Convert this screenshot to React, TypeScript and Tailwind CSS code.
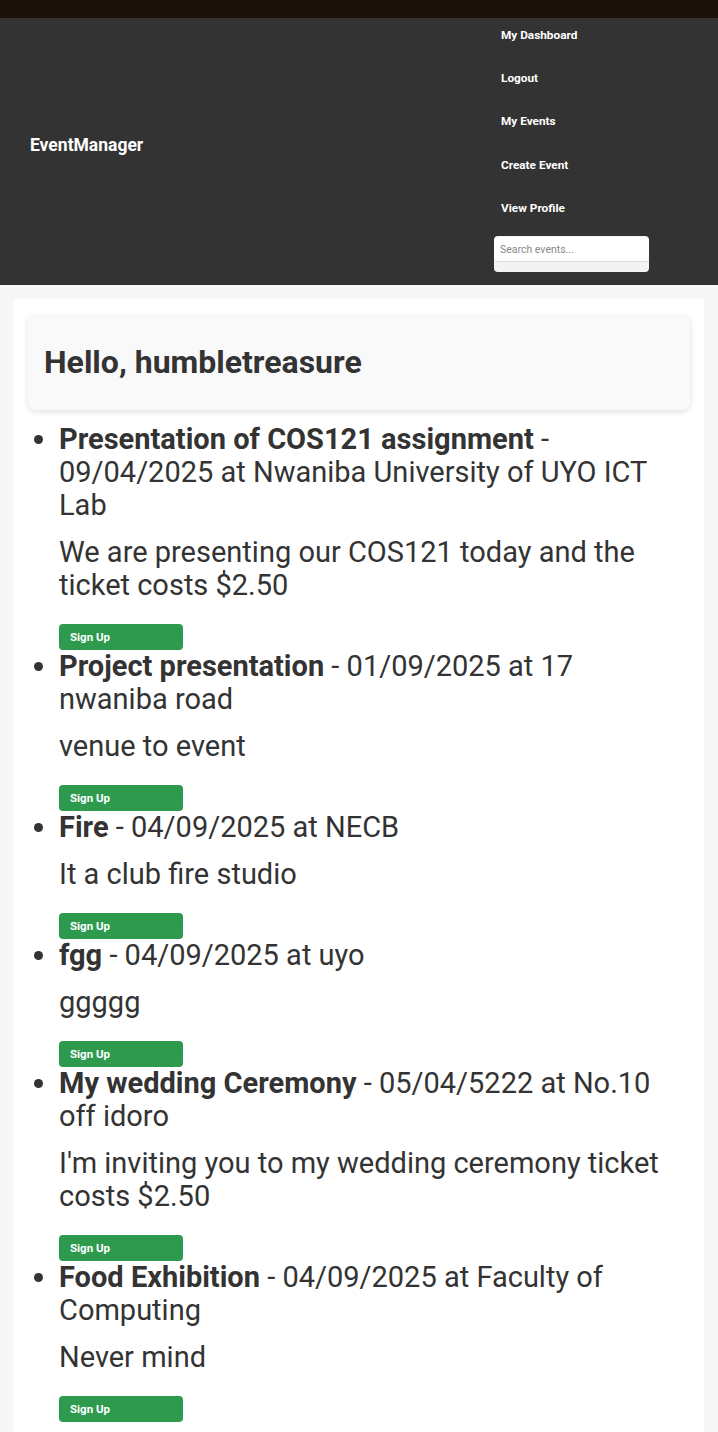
import React from "react";

type EventItem = {
  title: string;
  date: string;
  location: string;
  description: string;
};

const events: EventItem[] = [
  {
    title: "Presentation of COS121 assignment",
    date: "09/04/2025",
    location: "Nwaniba University of UYO ICT Lab",
    description: "We are presenting our COS121 today and the ticket costs $2.50",
  },
  {
    title: "Project presentation",
    date: "01/09/2025",
    location: "17 nwaniba road",
    description: "venue to event",
  },
  { title: "Fire", date: "04/09/2025", location: "NECB", description: "It a club fire studio" },
  { title: "fgg", date: "04/09/2025", location: "uyo", description: "ggggg" },
  {
    title: "My wedding Ceremony",
    date: "05/04/5222",
    location: "No.10 off idoro",
    description: "I'm inviting you to my wedding ceremony ticket costs $2.50",
  },
  {
    title: "Food Exhibition",
    date: "04/09/2025",
    location: "Faculty of Computing",
    description: "Never mind",
  },
];

const navLinks = ["My Dashboard", "Logout", "My Events", "Create Event", "View Profile"];

export default function App() {
  return (
    <div className="min-h-[1432px] bg-[#f7f7f7] font-['Roboto',sans-serif] text-[#333]">
      {/* status bar */}
      <div className="h-[18px] bg-[#1b120b]" />

      {/* Navbar */}
      <nav className="flex items-center justify-between bg-[#333] pl-[30px] pr-[69px]">
        <div className="mb-[12px] text-[17.5px] font-bold text-white">EventManager</div>
        <div className="flex w-[155px] flex-col pt-[11px] pb-[13px]">
          <div className="flex flex-col gap-[30.2px] pl-[7px]">
            {navLinks.map((link) => (
              <a key={link} className="text-[11.8px] leading-[13px] font-bold text-white">
                {link}
              </a>
            ))}
          </div>
          <div className="mt-[21px] h-[36px] overflow-hidden rounded-[4px] bg-[#f3f3f3]">
            <input
              placeholder="Search events..."
              className="h-[25px] w-full rounded-[4px] border-b border-[#ddd] bg-white px-[6px] text-[10.5px] text-[#333] placeholder:text-[#888] outline-none"
            />
          </div>
        </div>
      </nav>

      {/* Main */}
      <main className="px-[14px] pt-[14px]">
        <div className="rounded-t-[4px] bg-white px-[14px] pt-[16px] pb-[10px]">
          <div className="flex h-[95px] items-center rounded-[8px] bg-[#f9f9f9] px-[16px] shadow-[0_2px_6px_rgba(0,0,0,0.12)]">
            <h2 className="text-[32px] font-bold text-[#333]">Hello, humbletreasure</h2>
          </div>

          <ul className="mt-[13px] list-disc pl-[31px] pr-[26px] text-[29px] leading-[33px]">
            {events.map((ev) => (
              <li key={ev.title}>
                <strong className="font-bold">{ev.title}</strong> - {ev.date} at {ev.location}
                <p className="mt-[14px] mb-[22px]">{ev.description}</p>
                <button className="block h-[26px] w-[124px] rounded-[4px] bg-[#2e9a4e] pl-[11px] text-left text-[11.5px] leading-[26px] font-bold text-white">
                  Sign Up
                </button>
              </li>
            ))}
          </ul>
        </div>
      </main>
    </div>
  );
}
